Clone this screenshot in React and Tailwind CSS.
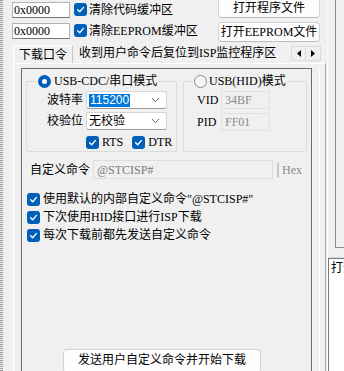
import React from "react";

function Check({ disabled }) {
  if (disabled) {
    return <span className="w-[12px] h-[12px] rounded-[3px] border border-[#c6c6c6] bg-[#f7f7f7] shrink-0" />;
  }
  return (
    <span className="w-[13px] h-[13px] rounded-[3px] bg-[#005fb8] flex items-center justify-center shrink-0">
      <svg width="9" height="9" viewBox="0 0 10 10">
        <path d="M1.8 5.3 4.1 7.5 8.3 2.7" fill="none" stroke="#fff" strokeWidth="1.5" strokeLinecap="round" strokeLinejoin="round" />
      </svg>
    </span>
  );
}

function Radio({ on }) {
  if (on) {
    return (
      <span className="w-[13px] h-[13px] rounded-full bg-[#005fb8] flex items-center justify-center shrink-0">
        <span className="w-[5px] h-[5px] rounded-full bg-white" />
      </span>
    );
  }
  return <span className="w-[13px] h-[13px] rounded-full border border-[#8a8a8a] bg-[#f6f6f6] shrink-0" />;
}

function Chevron() {
  return (
    <svg width="9" height="6" viewBox="0 0 9 6" className="shrink-0">
      <path d="M0.8 1 4.5 4.7 8.2 1" fill="none" stroke="#5f5f5f" strokeWidth="1" />
    </svg>
  );
}

function Select({ children }) {
  return (
    <div className="w-[81px] h-[18px] bg-white border border-[#d6d6d6] border-b-[#9a9a9a] rounded-[3px] flex items-center pl-[2px] pr-[6px]">
      <div className="flex-1 flex items-center">{children}</div>
      <Chevron />
    </div>
  );
}

function Btn({ children, className }) {
  return (
    <div className={"bg-[#fdfdfd] border border-[#d2d2d2] border-b-[#bcbcbc] rounded-[4px] flex items-center justify-center " + className}>
      {children}
    </div>
  );
}

export default function App() {
  return (
    <div className="w-[344px] h-[371px] overflow-hidden bg-[#f0f0f0] flex font-['Liberation_Serif','Noto_Sans_CJK_SC',serif] text-[12px] leading-[14px] text-black">
      {/* left dotted splitter */}
      <div className="w-[3px] shrink-0 bg-[repeating-linear-gradient(0deg,#9a9a9a_0px,#9a9a9a_1px,#f0f0f0_1px,#f0f0f0_2px)]" />

      {/* main column */}
      <div className="w-[324px] shrink-0 flex flex-col">
        {/* top rows */}
        <div className="pl-[9px] pr-[7px]">
          <div className="flex items-start mt-[2px]">
            <div className="w-[58px] h-[16px] bg-white border border-[#b4b4b4] border-b-[#767676] pl-[1px] flex items-center">0x0000</div>
            <div className="ml-[4px] mt-[1px]"><Check /></div>
            <span className="ml-[2px] mt-[1px]">清除代码缓冲区</span>
            <Btn className="ml-auto mt-[-4px] w-[102px] h-[20px]">打开程序文件</Btn>
          </div>
          <div className="flex items-start mt-[3px]">
            <div className="w-[58px] h-[16px] mt-[2px] bg-white border border-[#b4b4b4] border-b-[#767676] pl-[1px] flex items-center">0x0000</div>
            <div className="ml-[4px] mt-[3px]"><Check /></div>
            <span className="ml-[2px] mt-[3px]">清除EEPROM缓冲区</span>
            <Btn className="ml-auto mt-[1px] w-[102px] h-[20px]">打开EEPROM文件</Btn>
          </div>
        </div>

        {/* tab strip */}
        <div className="flex items-end h-[20px] mt-[3px] pl-[10px] pr-[6px]">
          <div className="w-[60px] h-[18px] border-t border-l border-white border-r border-r-[#c4c4c4] flex items-center justify-center">下载口令</div>
          <span className="ml-[6px] mb-[3px]">收到用户命令后复位到ISP监控程序区</span>
          <div className="ml-auto self-start mt-[1px] flex">
            <div className="w-[15px] h-[15px] border border-[#dadada] flex items-center justify-center">
              <svg width="4" height="7" viewBox="0 0 4 7"><path d="M4 0V7L0 3.5Z" fill="#000" /></svg>
            </div>
            <div className="w-[15px] h-[15px] border border-l-0 border-[#dadada] flex items-center justify-center">
              <svg width="4" height="7" viewBox="0 0 4 7"><path d="M0 0V7L4 3.5Z" fill="#000" /></svg>
            </div>
          </div>
        </div>

        {/* tab page */}
        <div className="flex-1 ml-[10px] mr-[1px] border-l border-t border-white border-r border-r-[#a6a6a6] pl-[7px] pt-[4px] pr-[5px] flex">
          <div className="flex-1 flex border-r border-white pr-[7px]">
            <div className="flex-1 h-[320px] border border-[#6c6c6c] flex flex-col">
              {/* groups */}
              <div className="flex gap-[6px] pl-[4px] mt-[5px]">
                <fieldset className="w-[151px] h-[78px] border border-[#dcdcdc] rounded-[2px]">
                  <legend className="ml-[10px] px-[1px] flex items-center gap-[3px]">
                    <Radio on />
                    <span>USB-CDC/串口模式</span>
                  </legend>
                  <div className="flex items-center mt-[3px]">
                    <span className="w-[56px] text-right">波特率</span>
                    <div className="ml-[3px]">
                      <Select>
                        <span className="bg-[#0078d7] text-white px-[1px] h-[13px] flex items-center font-['Liberation_Sans',sans-serif]">115200</span>
                      </Select>
                    </div>
                  </div>
                  <div className="flex items-center mt-[3px]">
                    <span className="w-[56px] text-right">校验位</span>
                    <div className="ml-[3px]"><Select><span>无校验</span></Select></div>
                  </div>
                  <div className="flex items-center mt-[5px] pl-[59px]">
                    <Check />
                    <span className="ml-[3px]">RTS</span>
                    <span className="ml-[9px]"><Check /></span>
                    <span className="ml-[3px]">DTR</span>
                  </div>
                </fieldset>

                <fieldset className="w-[124px] h-[78px] border border-[#dcdcdc] rounded-[2px]">
                  <legend className="ml-[9px] px-[1px] flex items-center gap-[2px]">
                    <Radio />
                    <span>USB(HID)模式</span>
                  </legend>
                  <div className="flex items-center mt-[3px] pl-[13px]">
                    <span className="w-[24px]">VID</span>
                    <div className="w-[49px] h-[18px] border border-[#e2e2e2] pl-[3px] flex items-center text-[#8a8a8a]">34BF</div>
                  </div>
                  <div className="flex items-center mt-[4px] pl-[13px]">
                    <span className="w-[24px]">PID</span>
                    <div className="w-[49px] h-[18px] border border-[#e2e2e2] pl-[3px] flex items-center text-[#8a8a8a]">FF01</div>
                  </div>
                </fieldset>
              </div>

              {/* custom command */}
              <div className="flex items-center mt-[8px] pl-[8px]">
                <span>自定义命令</span>
                <div className="ml-[3px] w-[180px] h-[19px] border border-[#dedede] pl-[3px] flex items-center text-[#7a7a7a]">@STCISP#</div>
                <span className="ml-[4px]"><Check disabled /></span>
                <span className="ml-[3px] text-[#8a8a8a]">Hex</span>
              </div>

              {/* options */}
              <div className="flex flex-col gap-[4px] mt-[13px] pl-[5px]">
                <div className="flex items-center h-[14px]"><Check /><span className="ml-[3px]">使用默认的内部自定义命令"@STCISP#"</span></div>
                <div className="flex items-center h-[14px]"><Check /><span className="ml-[3px]">下次使用HID接口进行ISP下载</span></div>
                <div className="flex items-center h-[14px]"><Check /><span className="ml-[3px]">每次下载前都先发送自定义命令</span></div>
              </div>

              <Btn className="mt-[107px] ml-[41px] w-[198px] h-[24px] items-start pt-[3px]">发送用户自定义命令并开始下载</Btn>
            </div>
          </div>
        </div>
      </div>

      {/* right column */}
      <div className="flex-1 flex flex-col border-l border-[#f8f8f8]">
        <div className="h-[248px] ml-[7px] border-l border-b border-[#8c8c8c]" />
        <div className="h-[10px] border-b border-[#cfe0f0]" />
        <div className="flex-1 bg-white border-l border-t border-[#7a7a7a] pl-[2px] pt-[2px] overflow-hidden whitespace-nowrap">打开</div>
      </div>
    </div>
  );
}
